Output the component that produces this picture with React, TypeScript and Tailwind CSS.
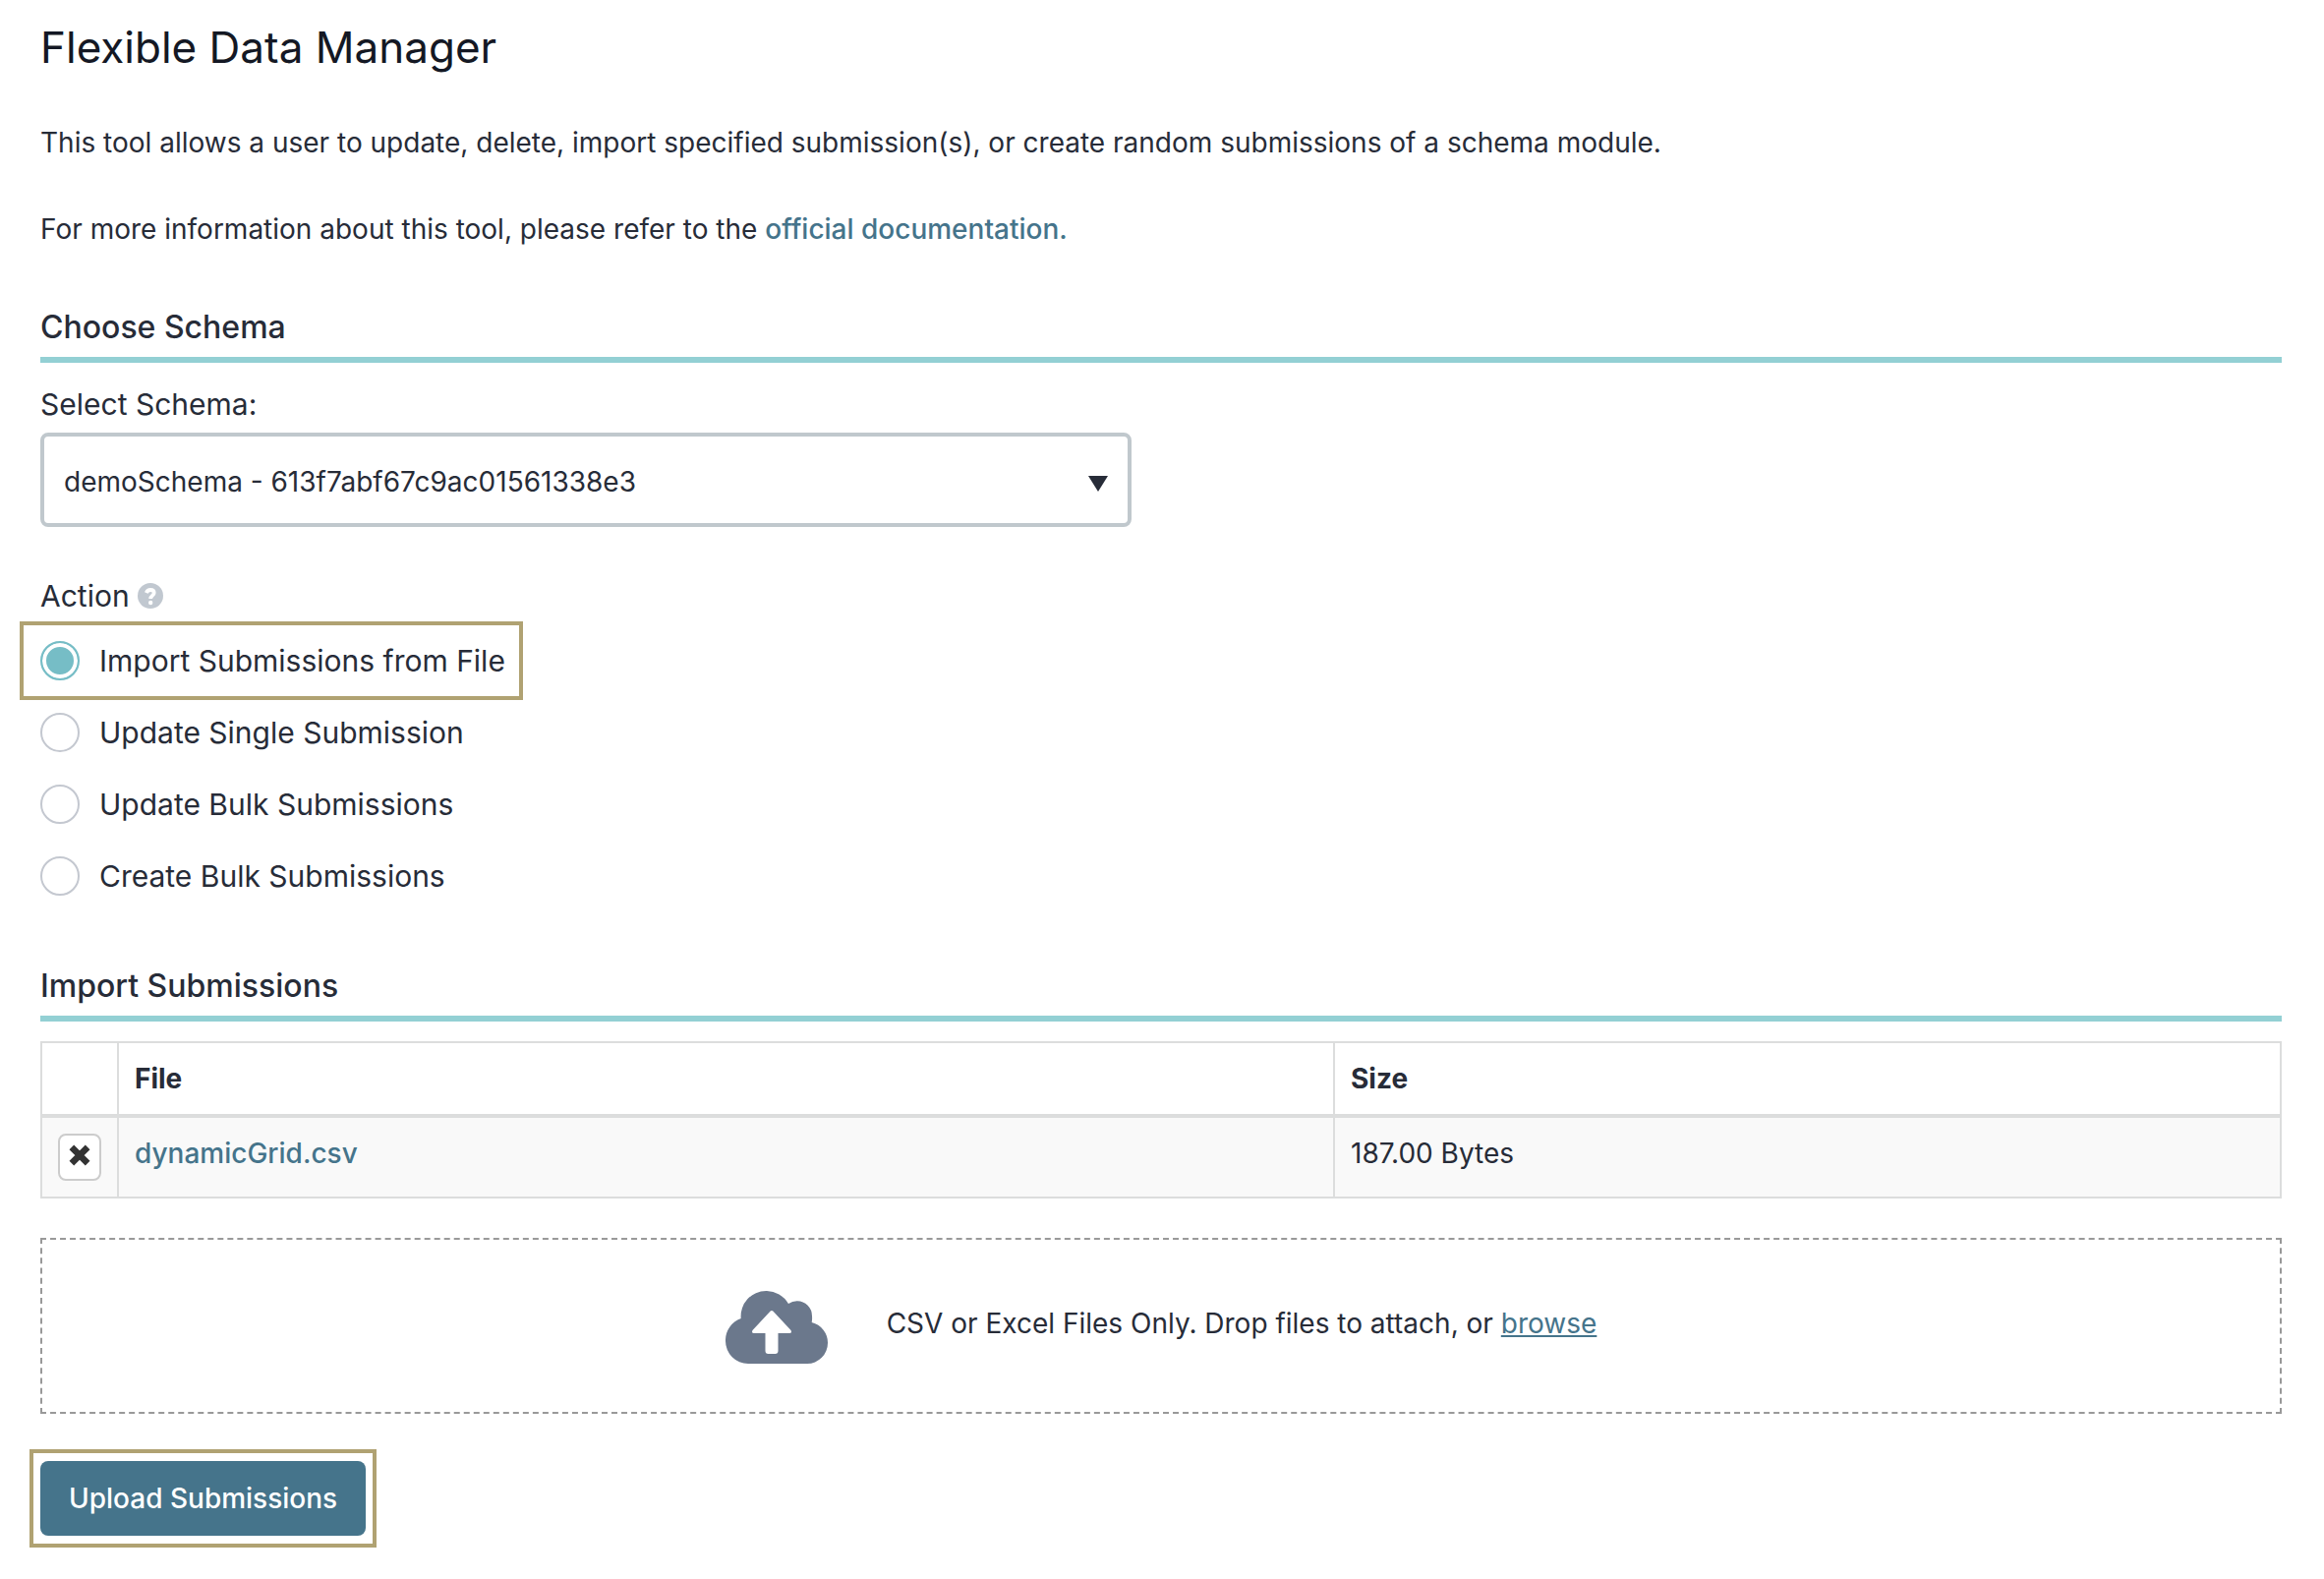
import { useState } from "react";

const schemas = ["demoSchema - 613f7abf67c9ac01561338e3"];

const actions = [
    "Import Submissions from File",
    "Update Single Submission",
    "Update Bulk Submissions",
    "Create Bulk Submissions",
];

type UploadFile = {
    name: string;
    size: string;
};

function SectionHeading({ children }: { children: string }) {
    return (
        <h2 className="border-b-6 border-[#93d0d4] pb-1.5 text-[32px] leading-12 font-medium">
            {children}
        </h2>
    );
}

function HelpIcon() {
    return (
        <svg viewBox="0 0 26 26" className="size-[26px]" aria-hidden="true">
            <circle cx="13" cy="13" r="13" fill="#c1c8d0" />
            <path
                d="M8.800 9.900C9.600 8 11 7 13 7c2.200 0 3.700 1.200 3.700 3 0 2.700-3.500 2.600-3.500 6"
                fill="none"
                stroke="#fff"
                strokeWidth="3.800"
            />
            <circle cx="13.200" cy="20" r="2.200" fill="#fff" />
        </svg>
    );
}

function CloudUploadIcon() {
    return (
        <svg viewBox="0 0 104 74" className="h-[74px] w-[104px]" aria-hidden="true">
            <path
                d="M23 74A23 23 0 0 1 0 51A23.500 23.500 0 0 1 15.700 28A25.700 25.700 0 0 1 41.300 0A25.700 25.700 0 0 1 64 13A15.200 15.200 0 0 1 73 10.300A15.200 15.200 0 0 1 88 25.500Q88.300 29 87.700 32A21.300 21.300 0 0 1 104 53A21 21 0 0 1 83 74z"
                fill="#6b788c"
            />
            <path
                d="M45.700 20.600q1.300-1.200 2.600 0L66.500 40q1.500 3-1.500 3H53.500v18q0 3-3 3h-7q-3 0-3-3V43H29q-3 0-1.500-3z"
                fill="#fff"
            />
        </svg>
    );
}

export default function App() {
    const [schema, setSchema] = useState(schemas[0]);
    const [action, setAction] = useState(actions[0]);
    const [files, setFiles] = useState<UploadFile[]>([
        { name: "dynamicGrid.csv", size: "187.00 Bytes" },
    ]);

    return (
        <main className="min-h-screen bg-white pt-5 pr-[43px] pb-8 pl-[41px] font-[Inter,sans-serif] text-[28px] leading-11 text-[#272c38]">
            <h1 className="text-[44px] leading-14 text-[#141824]">Flexible Data Manager</h1>
            <p className="mt-[47px]">
                This tool allows a user to update, delete, import specified submission(s), or create
                random submissions of a schema module.
            </p>
            <p className="mt-11">
                For more information about this tool, please refer to the{" "}
                <a href="#docs" className="font-medium text-[#45748b]">
                    official documentation.
                </a>
            </p>

            <section className="mt-[54px]">
                <SectionHeading>Choose Schema</SectionHeading>
                <label htmlFor="schema" className="mt-5 block text-[30px]">
                    Select Schema:
                </label>
                <div className="relative mt-[7px] w-[1110px] max-w-full">
                    <select
                        id="schema"
                        value={schema}
                        onChange={(e) => setSchema(e.target.value)}
                        className="block h-24 w-full appearance-none rounded-lg border-4 border-[#c0c8cd] bg-white px-5 pt-1"
                    >
                        {schemas.map((s) => (
                            <option key={s}>{s}</option>
                        ))}
                    </select>
                    <svg
                        viewBox="0 0 20 16"
                        className="pointer-events-none absolute top-11 right-6 h-4 w-5"
                        aria-hidden="true"
                    >
                        <path d="M0 0h20L10 16z" fill="#272c38" />
                    </svg>
                </div>
            </section>

            <fieldset className="mt-12 text-[30px]">
                <legend className="mb-1 flex items-center gap-2">
                    Action <HelpIcon />
                </legend>
                <div className="-ml-[21px] flex flex-col items-start">
                    {actions.map((a) => (
                        <label
                            key={a}
                            className={`-mb-[7px] flex h-20 items-center gap-5 border-4 pr-3.5 pl-[17px] ${
                                a === actions[0] ? "border-[#b0a272]" : "border-transparent"
                            }`}
                        >
                            <input
                                type="radio"
                                name="action"
                                checked={action === a}
                                onChange={() => setAction(a)}
                                className="size-10 appearance-none rounded-full border-2 border-[#c4c8d0] bg-white checked:border-[#76bdc6] checked:bg-[#76bdc6] checked:shadow-[inset_0_0_0_4px_white]"
                            />
                            {a}
                        </label>
                    ))}
                </div>
            </fieldset>

            <section className="mt-[55px]">
                <SectionHeading>Import Submissions</SectionHeading>
                <table className="mt-5 w-full border-collapse border-2 border-[#dcdddd] text-left">
                    <thead>
                        <tr className="h-[75px] border-b-4 border-[#dcdddd]">
                            <td className="w-[78px] border-r-2 border-[#dcdddd]" />
                            <th className="border-r-2 border-[#dcdddd] px-4 font-bold">File</th>
                            <th className="w-[963px] px-4 font-bold">Size</th>
                        </tr>
                    </thead>
                    <tbody>
                        {files.map((file) => (
                            <tr key={file.name} className="h-[83px] bg-[#f9f9f9]">
                                <td className="border-r-2 border-[#dcdddd] px-4">
                                    <button
                                        type="button"
                                        aria-label="Remove file"
                                        onClick={() => setFiles(files.filter((f) => f !== file))}
                                        className="flex h-12 w-11 items-center justify-center rounded-lg border-2 border-[#ccc] bg-white pb-1"
                                    >
                                        <svg viewBox="0 0 20 20" className="size-[22px]" aria-hidden="true">
                                            <path
                                                d="M2.600 2.600l14.800 14.800M17.400 2.600L2.600 17.400"
                                                stroke="#333"
                                                strokeWidth="6"
                                            />
                                        </svg>
                                    </button>
                                </td>
                                <td className="border-r-2 border-[#dcdddd] px-4 pb-2">
                                    <a href="#file" className="font-medium text-[#45748b]">
                                        {file.name}
                                    </a>
                                </td>
                                <td className="px-4 pb-2">{file.size}</td>
                            </tr>
                        ))}
                    </tbody>
                </table>

                <div className="mt-10 flex h-[179px] items-center justify-center gap-[60px] border-2 border-dashed border-[#999] pt-0.5">
                    <CloudUploadIcon />
                    <p className="pb-2">
                        CSV or Excel Files Only. Drop files to attach, or{" "}
                        <a href="#browse" className="text-[#45748b] underline">
                            browse
                        </a>
                    </p>
                </div>
            </section>

            <div className="mt-9 -ml-[11px] w-fit border-4 border-[#b0a272] px-[7px] py-2">
                <button
                    type="button"
                    className="h-[76px] rounded-lg bg-[#45748b] px-[29px] font-medium text-white"
                >
                    Upload Submissions
                </button>
            </div>
        </main>
    );
}
